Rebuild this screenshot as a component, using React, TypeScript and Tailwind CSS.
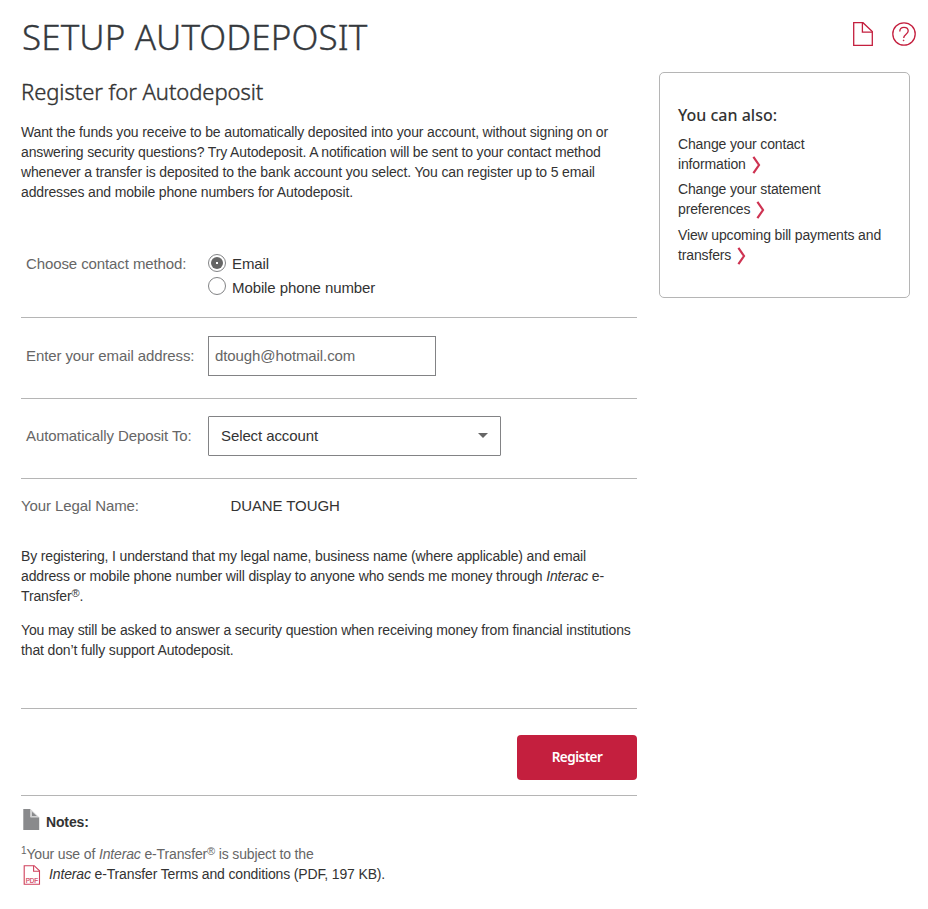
import type { ReactNode } from "react";

const HEADING = "font-['Noto_Sans','Open_Sans',sans-serif]";

function Chevron() {
  return (
    <svg className="ml-1.5 inline-block h-[18px] w-[9px] align-[-5px]" viewBox="0 0 9 18" fill="none">
      <path d="M1.4 0.8L7 9L1.4 17.2" stroke="#ce3352" strokeWidth="2.2" />
    </svg>
  );
}

function PageIcon() {
  return (
    <svg className="h-6 w-5" viewBox="0 0 20 24" fill="none" stroke="#c41f3e" strokeWidth="1.3">
      <path d="M0.7 0.7H10L19.3 9.6V23.3H0.7Z" />
      <path d="M9.4 0.7V10.1H19.3" />
    </svg>
  );
}

function HelpIcon() {
  return (
    <svg className="h-6 w-6" viewBox="0 0 24 24" fill="none" stroke="#c41f3e" strokeWidth="1.3">
      <circle cx="12" cy="12" r="11.2" />
      <path d="M7.8 9.4C7.8 6.8 9.5 5.3 12 5.3C14.5 5.3 16.2 6.9 16.2 9.1C16.2 12.2 11.7 12.3 11.7 16" />
      <circle cx="11.6" cy="18.4" r="0.5" fill="#c41f3e" strokeWidth="0.6" />
    </svg>
  );
}

function NoteIcon() {
  return (
    <svg className="h-[21px] w-[17px]" viewBox="0 0 17 21">
      <path d="M0.3 0H7.5V8.3H16.2V21H0.3Z" fill="#898a8c" />
      <path d="M7.5 0L16.2 8.3H7.5Z" fill="#d3d3d4" />
      <path d="M9 2.8L13.7 7H9Z" fill="#898a8c" />
    </svg>
  );
}

function PdfIcon() {
  return (
    <svg className="h-5 w-[18px]" viewBox="0 0 18 20" fill="none" stroke="#d0405c" strokeWidth="1.1">
      <path d="M1.2 0.7H11.2L16.5 5.8V19.3H1.2Z" />
      <path d="M10.6 0.7V6.3H16.5" />
      <text x="8.9" y="17.6" textAnchor="middle" fontSize="7" letterSpacing="0" fontFamily="Liberation Sans" fill="#d0405c" stroke="#d0405c" strokeWidth="0.2" textLength="12.5" lengthAdjust="spacingAndGlyphs">
        PDF
      </text>
    </svg>
  );
}

function Radio({ checked, children }: { checked?: boolean; children: ReactNode }) {
  return (
    <div className="flex h-[23px] text-[15px] leading-6 tracking-[-0.1px] text-[#333]">
      <svg className="mr-1.5 h-[18px] w-[18px] shrink-0" viewBox="0 0 18 18">
        <circle cx="9" cy="9" r="8.5" fill="#fff" stroke="#828385" />
        {checked && <circle cx="9" cy="9" r="6" fill="#666" />}
        {checked && <rect x="8" y="8" width="2" height="2" fill="#fff" />}
      </svg>
      <span className={checked ? "-mt-0.5" : "-mt-px"}>{children}</span>
    </div>
  );
}

function Label({ children }: { children: ReactNode }) {
  return (
    <div className="w-[187px] shrink-0 pl-[5px] text-[15px] leading-5 tracking-[-0.1px] text-[#666]">{children}</div>
  );
}

function Reg() {
  return <sup className="relative -top-1 align-baseline text-[11px] leading-none">®</sup>;
}

const links = [
  ["Change your contact", "information"],
  ["Change your statement", "preferences"],
  ["View upcoming bill payments and", "transfers"],
];

export default function App() {
  return (
    <div className="h-[909px] w-[928px] overflow-hidden bg-white pl-[21px] font-['Liberation_Sans',Arial,sans-serif] text-sm leading-5 tracking-[-0.145px] text-[#333]">
      <header className="flex h-[72px] justify-between pr-3">
        <h1 className={`${HEADING} pt-3 pl-px text-[35px] leading-[50px] font-light tracking-[0.1px] whitespace-nowrap text-[#35393d] [-webkit-text-stroke:0.35px_#35393d]`}>
          SETUP AUTODEPOSIT
        </h1>
        <div className="flex gap-[19px] pt-[22px]">
          <PageIcon />
          <HelpIcon />
        </div>
      </header>
      <div className="flex items-start gap-[22px]">
        <main className="w-[616px] shrink-0">
          <h2 className={`${HEADING} h-[50px] pt-1 text-[22px] leading-[30px] font-light tracking-[-0.05px] whitespace-nowrap [-webkit-text-stroke:0.4px_#333]`}>
            Register for Autodeposit
          </h2>
          <p className="whitespace-nowrap">
            Want the funds you receive to be automatically deposited into your account, without signing on or
            <br />
            answering security questions? Try Autodeposit. A notification will be sent to your contact method
            <br />
            whenever a transfer is deposited to the bank account you select. You can register up to 5 email
            <br />
            addresses and mobile phone numbers for Autodeposit.
          </p>
          <section className="mt-[52px] flex h-16 border-b border-[#b5b5b5]">
            <Label>Choose contact method:</Label>
            <div className="flex flex-col">
              <Radio checked>Email</Radio>
              <Radio>Mobile phone number</Radio>
            </div>
          </section>
          <section className="flex h-[81px] items-center border-b border-[#b5b5b5] pb-1">
            <Label>Enter your email address:</Label>
            <div className="flex h-10 w-[228px] items-center border border-[#828385] pl-1.5 text-[15px] tracking-[-0.1px] text-[#666]">
              dtough@hotmail.com
            </div>
          </section>
          <section className="flex h-20 items-center border-b border-[#b5b5b5] pb-[5px]">
            <Label>Automatically Deposit To:</Label>
            <div className="flex h-10 w-[293px] items-center justify-between rounded-[1px] border border-[#828385] pr-3 pl-3 text-[15px] tracking-[-0.1px]">
              Select account
              <svg className="mb-0.5 h-[5px] w-[10px]" viewBox="0 0 10 5">
                <path d="M0 0H10L5 5Z" fill="#666" />
              </svg>
            </div>
          </section>
          <section className="flex pt-[17px] text-[15px] tracking-[-0.1px]">
            <span className="w-[209.5px] text-[#666]">Your Legal Name:</span>
            <span>DUANE TOUGH</span>
          </section>
          <p className="mt-[30px] whitespace-nowrap">
            By registering, I understand that my legal name, business name (where applicable) and email
            <br />
            address or mobile phone number will display to anyone who sends me money through <i>Interac</i> e-
            <br />
            Transfer
            <Reg />.
          </p>
          <p className="mt-3.5 whitespace-nowrap">
            You may still be asked to answer a security question when receiving money from financial institutions
            <br />
            that don’t fully support Autodeposit.
          </p>
          <div className="mt-12 flex h-[88px] justify-end border-y border-[#b5b5b5] pt-[26px]">
            <button className={`${HEADING} h-[45px] w-[120px] rounded bg-[#c41f3e] pb-0.5 text-[13.5px] leading-5 font-semibold tracking-[-0.5px] text-white`}>
              Register
            </button>
          </div>
          <div className="flex pt-[13px] pl-0.5">
            <NoteIcon />
            <b className="pt-[3px] pl-[6px]">Notes:</b>
          </div>
          <div className="mt-3 text-[#666]">
            <sup className="relative -top-[5px] align-baseline text-[10px] leading-none">1</sup>
            Your use of <i>Interac</i> e-Transfer
            <Reg /> is subject to the
          </div>
          <div className="flex pl-0.5">
            <span className="pt-px">
              <PdfIcon />
            </span>
            <span className="pl-2">
              <i>Interac</i> e-Transfer Terms and conditions (PDF, 197 KB).
            </span>
          </div>
        </main>
        <aside className="h-[226px] w-[251px] rounded-[5px] border border-[#b5b5b5] pt-[30px] pl-[18px]">
          <h3 className={`${HEADING} text-[16px] leading-6 font-medium tracking-normal`}>You can also:</h3>
          <ul className="flex flex-col gap-[5.4px] pt-[7px]">
            {links.map(([first, last]) => (
              <li key={last} className="h-10 whitespace-nowrap">
                <div className="h-5">{first}</div>
                <div className="h-5">
                  {last}
                  <Chevron />
                </div>
              </li>
            ))}
          </ul>
        </aside>
      </div>
    </div>
  );
}
